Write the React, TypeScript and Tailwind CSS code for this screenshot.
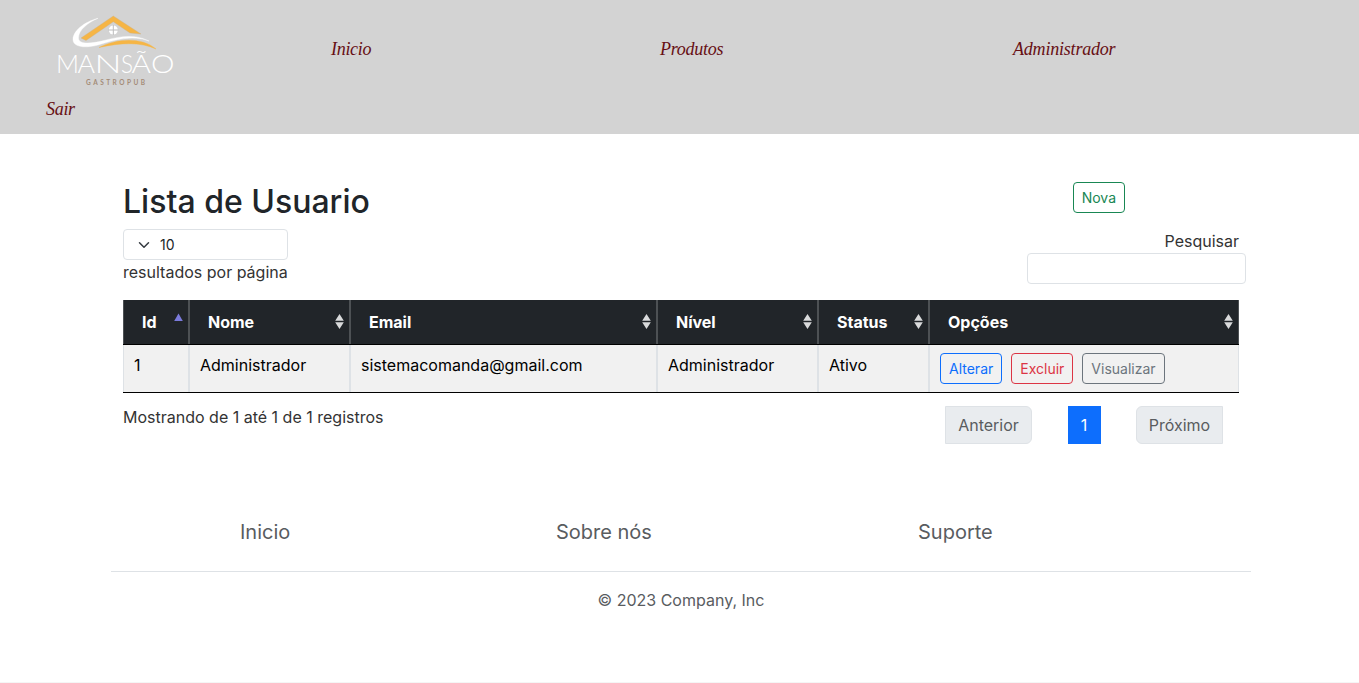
import React from "react";

const navFont =
  "block font-['Monotype_Corsiva','Z003','URW_Chancery_L','Liberation_Serif',serif] italic text-[#670f14] text-[18px] leading-6 whitespace-nowrap";

const letters = [
  { char: "M", x: 6, width: 23 },
  { char: "A", x: 27.5, width: 17.5 },
  { char: "N", x: 44.5, width: 27 },
  { char: "S", x: 71, width: 12 },
  { char: "Ã", x: 81.5, width: 19.5 },
  { char: "O", x: 101, width: 23.5 },
];

function Logo() {
  return (
    <svg width="130" height="90" viewBox="0 0 130 90" role="img" aria-label="Mansão Gastropub">
      <path d="M31 37 63.300 15 91 33 80 32 63.300 20.800 36 39.500Z" fill="#f6b545" stroke="#c9b48c" strokeWidth="0.400" />
      <path
        d="M48 17.300C34 21 23 30 23 38.500C23 46 35 47.500 48 44C64 39 83 33.500 99 40C84 32.500 70 35.500 54 39.500C40 43 28.500 43.500 28.500 37C28.500 29 38 21.500 48 17.300Z"
        fill="#fff"
        stroke="#fff"
        strokeWidth="0.400"
      />
      <path d="M49 46.500C67 37.500 91 35.500 106 48C92 41.500 73 41 49 46.500Z" fill="#f6b545" stroke="#f6b545" strokeWidth="0.400" />
      <circle cx="63.300" cy="29" r="4.500" fill="#fff" />
      <path d="M63.300 24V34M58.300 29H68.300" stroke="#bcbcbc" strokeWidth="1" />
      <g fill="#fff" className="font-['Lato',sans-serif] text-[24.5px] font-light">
        {letters.map((l) => (
          <text key={l.char} x={l.x} y="72" textLength={l.width} lengthAdjust="spacingAndGlyphs">
            {l.char}
          </text>
        ))}
      </g>
      <text x="36" y="83.500" textLength="59" fill="#a38b77" className="font-['Lato',sans-serif] text-[6.5px] font-bold">
        GASTROPUB
      </text>
    </svg>
  );
}

function SortIcon({ active }: { active?: boolean }) {
  return (
    <svg width="9" height="16" viewBox="0 0 9 16" className="shrink-0">
      {active ? (
        <path d="M4.500 0.500 8.800 8H0.200Z" fill="#7b7bdc" />
      ) : (
        <path d="M4.500 1 8.800 7.800H0.200ZM0.200 9.200H8.800L4.500 16Z" fill="#d9dadb" />
      )}
    </svg>
  );
}

const columns = ["Id", "Nome", "Email", "Nível", "Status", "Opções"];
const grid = "grid grid-cols-[66px_161px_307px_161px_111px_310px]";
const cell = "border-l border-r border-[#dee2e6] pl-[10px] pt-2 leading-6";
const smallButton = "h-[31px] rounded-[4px] border px-2 text-[14px] leading-[21px]";

export default function App() {
  return (
    <div className="h-[683px] overflow-hidden bg-white font-['Inter',sans-serif] text-[16px] text-[#333]">
      <header className="h-[134px] bg-[#d3d3d3]">
        <div className="flex h-[97px]">
          <a className="ml-[50px] block w-[281px] pt-px">
            <Logo />
          </a>
          <a className={`${navFont} w-[329px] pt-[37px] tracking-[-0.3px]`}>Inicio</a>
          <a className={`${navFont} w-[353px] pt-[37px] tracking-[-0.25px]`}>Produtos</a>
          <a className={`${navFont} pt-[37px] tracking-[-0.2px]`}>Administrador</a>
        </div>
        <a className={`${navFont} ml-[46px] w-[29px] tracking-[-0.3px]`}>Sair</a>
      </header>

      <main className="ml-[123px] w-[1123px]">
        <div className="flex h-[95px] justify-between pt-[48px]">
          <h1 className="pt-px text-[32px] font-medium leading-[38px] text-[#212529]">Lista de Usuario</h1>
          <button className={`${smallButton} mr-[121px] border-[#198754] text-[#198754]`}>Nova</button>
        </div>
        <div className="flex h-[71px] justify-between">
          <label className="block w-[165px] whitespace-nowrap leading-6">
            <span className="flex h-[31px] items-center rounded-[4px] border border-[#dee2e6] pl-[14px] text-[14px] text-[#212529]">
              <svg width="12" height="12" viewBox="0 0 16 16" fill="none" stroke="#343a40" strokeWidth="2" strokeLinecap="round" strokeLinejoin="round">
                <path d="m2 5 6 6 6-6" />
              </svg>
              <span className="ml-[10px]">10</span>
            </span>
            resultados por página
          </label>
          <label className="flex w-[219px] flex-col leading-6">
            <span className="mr-[7px] text-right">Pesquisar</span>
            <input className="h-[31px] w-full rounded-[4px] border border-[#dee2e6]" />
          </label>
        </div>

        <div className="w-[1116px]">
          <div className={`${grid} h-[45px] border-b border-black bg-[#212529] font-bold text-white`}>
            {columns.map((name, i) => (
              <div key={name} className="flex items-start justify-between border-l border-r border-[#4d5154] pl-[18px] pr-[5px] pt-[10px] leading-6">
                <span>{name}</span>
                <span className="flex pt-[3px]"><SortIcon active={i === 0} /></span>
              </div>
            ))}
          </div>
          <div className={`${grid} h-[48px] border-b border-black bg-[#f1f1f1] text-black`}>
            <div className={cell}>1</div>
            <div className={cell}>Administrador</div>
            <div className={cell}>sistemacomanda@gmail.com</div>
            <div className={cell}>Administrador</div>
            <div className={cell}>Ativo</div>
            <div className={`${cell} flex gap-[9px]`}>
              <button className={`${smallButton} border-[#0d6efd] text-[#0d6efd]`}>Alterar</button>
              <button className={`${smallButton} border-[#dc3545] text-[#dc3545]`}>Excluir</button>
              <button className={`${smallButton} border-[#6c757d] text-[#6c757d]`}>Visualizar</button>
            </div>
          </div>
          <div className="flex h-[51px] justify-between">
            <p className="pt-3 leading-6">Mostrando de 1 até 1 de 1 registros</p>
            <div className="mr-[16px] mt-[13px] flex h-[38px] w-[278px] justify-between leading-6">
              <button className="w-[87px] rounded-r-[6px] border border-[#dee2e6] bg-[#e9ecef] text-[#595c5f]">Anterior</button>
              <button className="w-[33px] bg-[#0d6efd] text-white">1</button>
              <button className="w-[87px] rounded-l-[6px] border border-[#dee2e6] bg-[#e9ecef] text-[#595c5f]">Próximo</button>
            </div>
          </div>
        </div>
      </main>

      <footer className="ml-[111px] mt-[64px] w-[1140px] text-[#595c5f]">
        <nav className="flex h-[64px] border-b border-[#dee2e6] pt-[9px] text-[20px] leading-[30px]">
          <a className="ml-[129px] w-[316px]">Inicio</a>
          <a className="w-[362px]">Sobre nós</a>
          <a>Suporte</a>
        </nav>
        <p className="pt-4 text-center leading-6">© 2023 Company, Inc</p>
      </footer>
      <div className="mt-[70px] border-t border-[#f5f5f5]" />
    </div>
  );
}
